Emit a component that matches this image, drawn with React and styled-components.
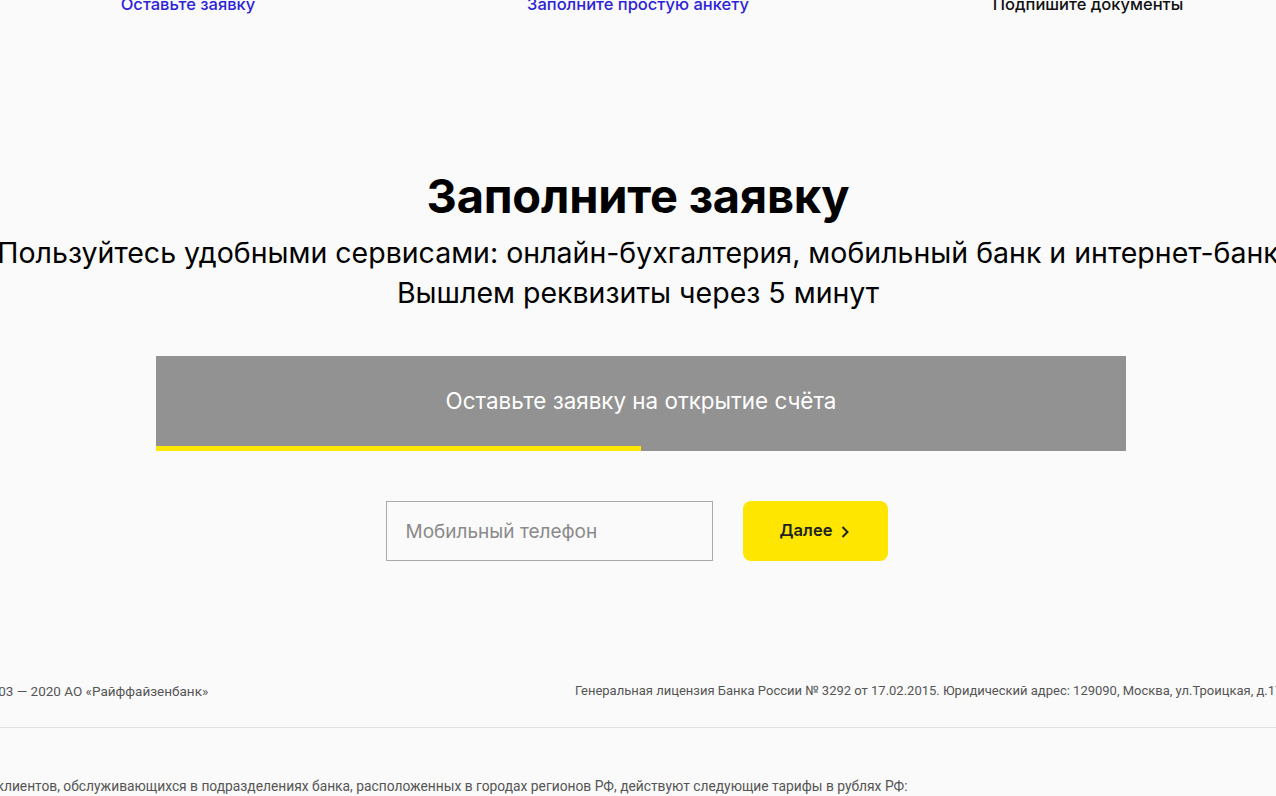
import styled, { createGlobalStyle } from "styled-components";
import { useState } from "react";

const GlobalStyle = createGlobalStyle`
  html, body {
    margin: 0;
    padding: 0;
    background: #fafafa;
    overflow: hidden;
  }
  body {
    font-family: Inter, "Noto Sans", sans-serif;
    color: #000;
  }
`;

const Page = styled.div`
  width: 1276px;
  height: 803px;
  overflow: hidden;
  margin-top: -7px;
`;

const Steps = styled.div`
  display: grid;
  grid-template-columns: repeat(3, 1fr);
  position: relative;
  width: 1350px;
  margin-left: -37px;
  height: 26px;
`;

const StepIcon = styled.span`
  position: absolute;
  left: 53px;
  top: 0;
  font-size: 9px;
  color: #333;
`;

const Step = styled.a`
  text-align: center;
  font-size: 16.5px;
  font-weight: 500;
  line-height: 22px;
  color: ${(p) => (p.$active ? "#111" : "#2d23d6")};
  text-decoration: none;
  cursor: pointer;
`;

const Hero = styled.section`
  display: flex;
  flex-direction: column;
  align-items: center;
  padding-top: 148px;
`;

const Title = styled.h1`
  margin: 0;
  font-size: 47px;
  font-weight: 700;
  line-height: 58px;
  letter-spacing: -0.2px;
`;

const Lead = styled.p`
  margin: 8px 0 0;
  font-size: 28.5px;
  font-weight: 400;
  line-height: 40px;
  text-align: center;
  white-space: nowrap;
`;

const Banner = styled.div`
  margin: 43px 0 0 6px;
  width: 970px;
  height: 95px;
  background: #929292;
  position: relative;
  display: flex;
  align-items: center;
  justify-content: center;
  color: #fff;
  font-size: 22.4px;
  font-weight: 400;
  padding-bottom: 7px;
  box-sizing: border-box;
`;

const Progress = styled.div`
  position: absolute;
  left: 0;
  bottom: 0;
  height: 5px;
  background: #fee600;
`;

const Form = styled.form`
  display: flex;
  gap: 30px;
  margin: 50px 0 0 -3px;
`;

const PhoneInput = styled.input`
  width: 327px;
  height: 60px;
  box-sizing: border-box;
  border: 1px solid #a9a9a9;
  background: #fafafa;
  padding: 0 19px;
  font-family: Inter, "Noto Sans", sans-serif;
  font-size: 19px;
  color: #222;
  outline: none;

  &::placeholder {
    color: #8a8a8a;
  }
`;

const NextButton = styled.button`
  width: 145px;
  height: 60px;
  border: none;
  border-radius: 8px;
  background: #fee600;
  font-family: Inter, "Noto Sans", sans-serif;
  font-size: 16.5px;
  font-weight: 600;
  color: #222;
  display: flex;
  align-items: center;
  justify-content: center;
  gap: 8px;
  padding-bottom: 4px;
  cursor: pointer;

  svg {
    width: 10px;
    height: 14px;
    margin-top: 4px;
  }
`;

const Footer = styled.footer`
  margin-top: 122px;
  font-family: Roboto, "Liberation Sans", sans-serif;
  font-size: 13px;
  color: #555;
`;

const FooterRow = styled.div`
  display: grid;
  grid-template-columns: 606px max-content;
  margin-left: -31px;
  white-space: nowrap;
  padding-bottom: 28px;
  border-bottom: 1px solid #e2e2e2;
`;

const Copyright = styled.span`
  font-size: 13.5px;
`;

const Tariffs = styled.p`
  margin: 50px 0 0 -33px;
  font-size: 13.8px;
  white-space: nowrap;
`;

const Chevron = () => (
  <svg viewBox="0 0 10 14" fill="none">
    <path d="M2.5 2 L7.5 7 L2.5 12" stroke="#222" strokeWidth="2" />
  </svg>
);

export default function App() {
  const [phone, setPhone] = useState("");

  return (
    <>
      <GlobalStyle />
      <Page>
        <Steps>
          <StepIcon>°</StepIcon>
          <Step>Оставьте заявку</Step>
          <Step>Заполните простую анкету</Step>
          <Step $active>Подпишите документы</Step>
        </Steps>

        <Hero>
          <Title>Заполните заявку</Title>
          <Lead>
            Пользуйтесь удобными сервисами: онлайн-бухгалтерия, мобильный банк и
            интернет-банк
            <br />
            Вышлем реквизиты через 5 минут
          </Lead>

          <Banner>
            Оставьте заявку на открытие счёта
            <Progress style={{ width: "50%" }} />
          </Banner>

          <Form onSubmit={(e) => e.preventDefault()}>
            <PhoneInput
              type="tel"
              placeholder="Мобильный телефон"
              value={phone}
              onChange={(e) => setPhone(e.target.value)}
            />
            <NextButton type="submit">
              Далее
              <Chevron />
            </NextButton>
          </Form>
        </Hero>

        <Footer>
          <FooterRow>
            <Copyright>© 2003 — 2020 АО «Райффайзенбанк»</Copyright>
            <span>
              Генеральная лицензия Банка России № 3292 от 17.02.2015. Юридический
              адрес: 129090, Москва, ул.Троицкая, д.17, стр.1
            </span>
          </FooterRow>
          <Tariffs>
            Для клиентов, обслуживающихся в подразделениях банка, расположенных в
            городах регионов РФ, действуют следующие тарифы в рублях РФ:
          </Tariffs>
        </Footer>
      </Page>
    </>
  );
}
